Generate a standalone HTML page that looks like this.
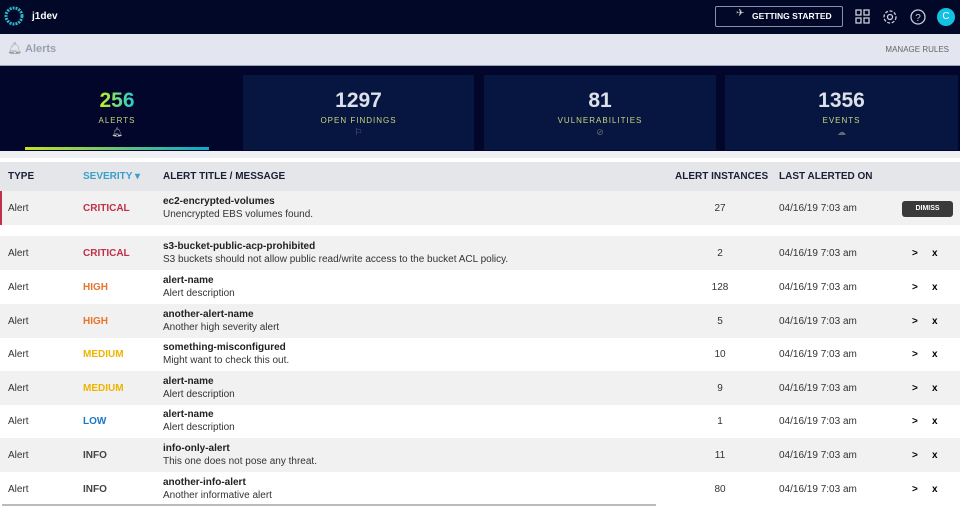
<!DOCTYPE html>
<html><head><meta charset="utf-8"><style>
*{margin:0;padding:0;box-sizing:border-box}
body{width:960px;height:520px;overflow:hidden;background:#fff;font-family:"Liberation Sans",sans-serif;position:relative}
.top{position:absolute;left:0;top:0;width:960px;height:34px;background:#020828}
.bar{position:absolute;left:0;top:34px;width:960px;height:32px;background:#e3e6f0;border-bottom:1px solid #9aa0b5}
.stats{position:absolute;left:0;top:66px;width:960px;height:85px;background:#01062a}
.card{position:absolute;top:9px;height:75px;background:#061640;text-align:center;color:#dde0ea}
.num{font-size:21px;font-weight:bold;margin-top:14px;line-height:24px}
.lbl{font-size:8px;letter-spacing:1px;color:#c9d47a;margin-top:3px}
.ico{font-size:9px;color:#667;margin-top:2px}
.strip{position:absolute;left:0;top:151px;width:960px;height:7px;background:#eef0f4}
.th{position:absolute;left:0;top:162px;width:960px;height:29px;background:#e4e6ea;font-size:10px;font-weight:bold;color:#1a1f36}
.th span,.row span{position:absolute}
.row{position:absolute;left:0;width:960px;height:34px;font-size:10px;color:#333}
.g{background:#f1f1f1}
.t{left:8px;top:12px}
.s{left:83px;top:12px;font-weight:bold}
.ti{left:163px;top:5px;font-weight:bold;color:#222}
.d{left:163px;top:18px}
.n{left:690px;width:60px;text-align:center;top:12px}
.dt{left:779px;top:12px}
.a{left:912px;top:12px;font-weight:bold;color:#000}
.x{left:932px;top:12px;font-weight:bold;color:#000}
</style></head><body>
<div class="top">
<svg style="position:absolute;left:3px;top:5px" width="22" height="22"><circle cx="11" cy="11" r="8" fill="none" stroke="#2bb5c9" stroke-width="3" stroke-dasharray="2 1"/></svg>
<span style="position:absolute;left:32px;top:11px;color:#fff;font-size:10px;font-weight:bold">j1dev</span>
<div style="position:absolute;left:715px;top:6px;width:128px;height:21px;border:1px solid #8a90a8;border-radius:2px;color:#fff;font-size:8.5px;font-weight:bold;line-height:19px;padding-left:36px">GETTING STARTED</div>
<span style="position:absolute;left:736px;top:8px;color:#ccc;font-size:10px">✈</span>
<svg style="position:absolute;left:855px;top:9px" width="16" height="16" fill="none" stroke="#ccd" stroke-width="1.3"><rect x="1" y="1" width="5" height="5"/><rect x="9" y="1" width="5" height="5"/><rect x="1" y="9" width="5" height="5"/><rect x="9" y="9" width="5" height="5"/></svg>
<svg style="position:absolute;left:881px;top:8px" width="18" height="18" fill="none" stroke="#ccd" stroke-width="1.3"><circle cx="9" cy="9" r="6" stroke-dasharray="3 1.6"/><circle cx="9" cy="9" r="2.5"/></svg>
<svg style="position:absolute;left:909px;top:8px" width="18" height="18" fill="none" stroke="#ccd" stroke-width="1.3"><circle cx="9" cy="9" r="7"/><text x="9" y="13" font-size="10" text-anchor="middle" fill="#ccd" stroke="none" font-family="Liberation Sans">?</text></svg>
<div style="position:absolute;left:937px;top:8px;width:18px;height:18px;border-radius:50%;background:#13c2e0;color:#fff;font-size:10px;text-align:center;line-height:18px">C</div>
</div>
<div class="bar">
<span style="position:absolute;left:7px;top:7px;color:#999;font-size:12px">🔔︎</span>
<span style="position:absolute;left:25px;top:9px;color:#9aa0b0;font-size:11px;font-weight:bold">Alerts</span>
<span style="position:absolute;right:11px;top:11px;color:#666;font-size:8px">MANAGE RULES</span>
</div>
<div class="stats">
<div class="card" style="left:0;width:234px;background:#01062a"><div class="num" style="background:linear-gradient(90deg,#c8f020,#20c8d8);-webkit-background-clip:text;color:transparent;display:inline-block">256</div><div class="lbl">ALERTS</div><div class="ico" style="color:#ccc">🔔︎</div>
<div style="position:absolute;left:25px;top:72px;width:184px;height:3px;background:linear-gradient(90deg,#c8e020,#0aa8d0)"></div></div>
<div class="card" style="left:243px;width:231px"><div class="num">1297</div><div class="lbl">OPEN FINDINGS</div><div class="ico">⚐</div></div>
<div class="card" style="left:484px;width:232px"><div class="num">81</div><div class="lbl">VULNERABILITIES</div><div class="ico">⊘</div></div>
<div class="card" style="left:725px;width:233px"><div class="num">1356</div><div class="lbl">EVENTS</div><div class="ico">☁</div></div>
</div>
<div class="strip"></div>
<div class="th"><span style="left:8px;top:9px">TYPE</span><span style="left:83px;top:9px;color:#3aa0c8">SEVERITY ▾</span><span style="left:163px;top:9px">ALERT TITLE / MESSAGE</span><span style="left:675px;top:9px">ALERT INSTANCES</span><span style="left:779px;top:9px">LAST ALERTED ON</span></div>
<div class="row g" style="top:191px;box-shadow:inset 2px 0 0 #c0304a"><span class="t">Alert</span><span class="s" style="color:#c0304a">CRITICAL</span><span class="ti">ec2-encrypted-volumes</span><span class="d">Unencrypted EBS volumes found.</span><span class="n">27</span><span class="dt">04/16/19 7:03 am</span><span style="left:902px;top:10px;width:51px;height:16px;background:#3a3a3a;border-radius:3px;color:#fff;font-size:7px;font-weight:bold;text-align:center;line-height:16px">DIMISS</span></div>
<div class="row g" style="top:236px"><span class="t">Alert</span><span class="s" style="color:#c0304a">CRITICAL</span><span class="ti">s3-bucket-public-acp-prohibited</span><span class="d">S3 buckets should not allow public read/write access to the bucket ACL policy.</span><span class="n">2</span><span class="dt">04/16/19 7:03 am</span><span class="a">&gt;</span><span class="x">x</span></div>
<div class="row" style="top:270px"><span class="t">Alert</span><span class="s" style="color:#e8742a">HIGH</span><span class="ti">alert-name</span><span class="d">Alert description</span><span class="n">128</span><span class="dt">04/16/19 7:03 am</span><span class="a">&gt;</span><span class="x">x</span></div>
<div class="row g" style="top:304px"><span class="t">Alert</span><span class="s" style="color:#e8742a">HIGH</span><span class="ti">another-alert-name</span><span class="d">Another high severity alert</span><span class="n">5</span><span class="dt">04/16/19 7:03 am</span><span class="a">&gt;</span><span class="x">x</span></div>
<div class="row" style="top:337px"><span class="t">Alert</span><span class="s" style="color:#f0b400">MEDIUM</span><span class="ti">something-misconfigured</span><span class="d">Might want to check this out.</span><span class="n">10</span><span class="dt">04/16/19 7:03 am</span><span class="a">&gt;</span><span class="x">x</span></div>
<div class="row g" style="top:371px"><span class="t">Alert</span><span class="s" style="color:#f0b400">MEDIUM</span><span class="ti">alert-name</span><span class="d">Alert description</span><span class="n">9</span><span class="dt">04/16/19 7:03 am</span><span class="a">&gt;</span><span class="x">x</span></div>
<div class="row" style="top:404px"><span class="t">Alert</span><span class="s" style="color:#1a78c8">LOW</span><span class="ti">alert-name</span><span class="d">Alert description</span><span class="n">1</span><span class="dt">04/16/19 7:03 am</span><span class="a">&gt;</span><span class="x">x</span></div>
<div class="row g" style="top:438px"><span class="t">Alert</span><span class="s" style="color:#444">INFO</span><span class="ti">info-only-alert</span><span class="d">This one does not pose any threat.</span><span class="n">11</span><span class="dt">04/16/19 7:03 am</span><span class="a">&gt;</span><span class="x">x</span></div>
<div class="row" style="top:472px"><span class="t">Alert</span><span class="s" style="color:#444">INFO</span><span class="ti">another-info-alert</span><span class="d">Another informative alert</span><span class="n">80</span><span class="dt">04/16/19 7:03 am</span><span class="a">&gt;</span><span class="x">x</span></div>
<div style="position:absolute;left:2px;top:504px;width:654px;height:2px;background:#bbb"></div>
</body></html>
